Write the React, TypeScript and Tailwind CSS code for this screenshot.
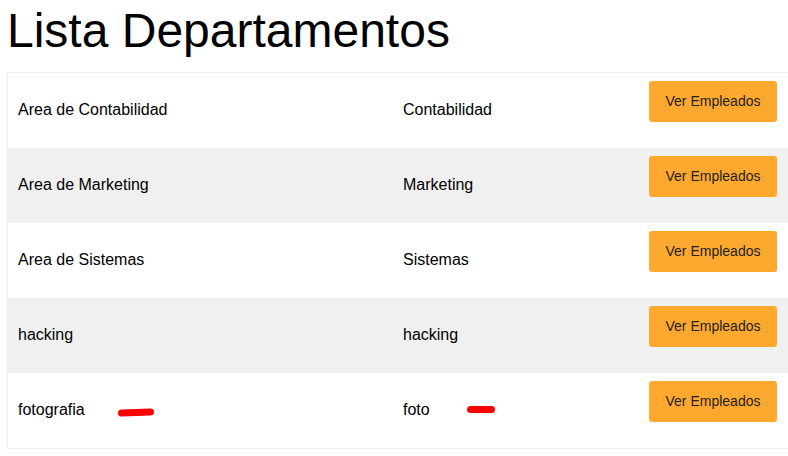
import React from 'react';

interface Departamento {
  nombre: string;
  area: string;
  marcado?: boolean;
}

const departamentos: Departamento[] = [
  { nombre: 'Area de Contabilidad', area: 'Contabilidad' },
  { nombre: 'Area de Marketing', area: 'Marketing' },
  { nombre: 'Area de Sistemas', area: 'Sistemas' },
  { nombre: 'hacking', area: 'hacking' },
  { nombre: 'fotografia', area: 'foto', marcado: true },
];

const App: React.FC = () => {
  return (
    <div className="w-[788px] h-[456px] overflow-hidden bg-white text-black font-['Liberation_Sans',Arial,sans-serif]">
      <h1 className="pl-[7px] pt-[3px] text-[48px] leading-[55px] font-normal mb-[14px]">Lista Departamentos</h1>

      <div className="ml-[7px] w-[900px] border border-[#eeeeee]">
        {departamentos.map((dep, i) => (
          <div
            key={dep.nombre}
            className={`grid grid-cols-[385px_248px_1fr] h-[75px] ${i % 2 === 1 ? 'bg-[#f0f0f0]' : 'bg-white'}`}
          >
            <div className="flex items-center pl-[10px] pb-[2px] text-[16px]">
              <span>{dep.nombre}</span>
              {dep.marcado && (
                <span className="inline-block ml-[33px] mt-[6px] w-[36px] h-[7px] rounded-full bg-[#ff0000] -rotate-2" />
              )}
            </div>
            <div className="flex items-center pl-[10px] pb-[2px] text-[16px]">
              <span>{dep.area}</span>
              {dep.marcado && (
                <span className="inline-block ml-[37px] w-[28px] h-[7px] rounded-full bg-[#ff0000]" />
              )}
            </div>
            <div className="pt-[8px] pl-[8px]">
              <button className="w-[128px] h-[41px] rounded-[3px] bg-[#fea82f] text-[14px] text-[#222222]">
                Ver Empleados
              </button>
            </div>
          </div>
        ))}
      </div>
    </div>
  );
};

export default App;
